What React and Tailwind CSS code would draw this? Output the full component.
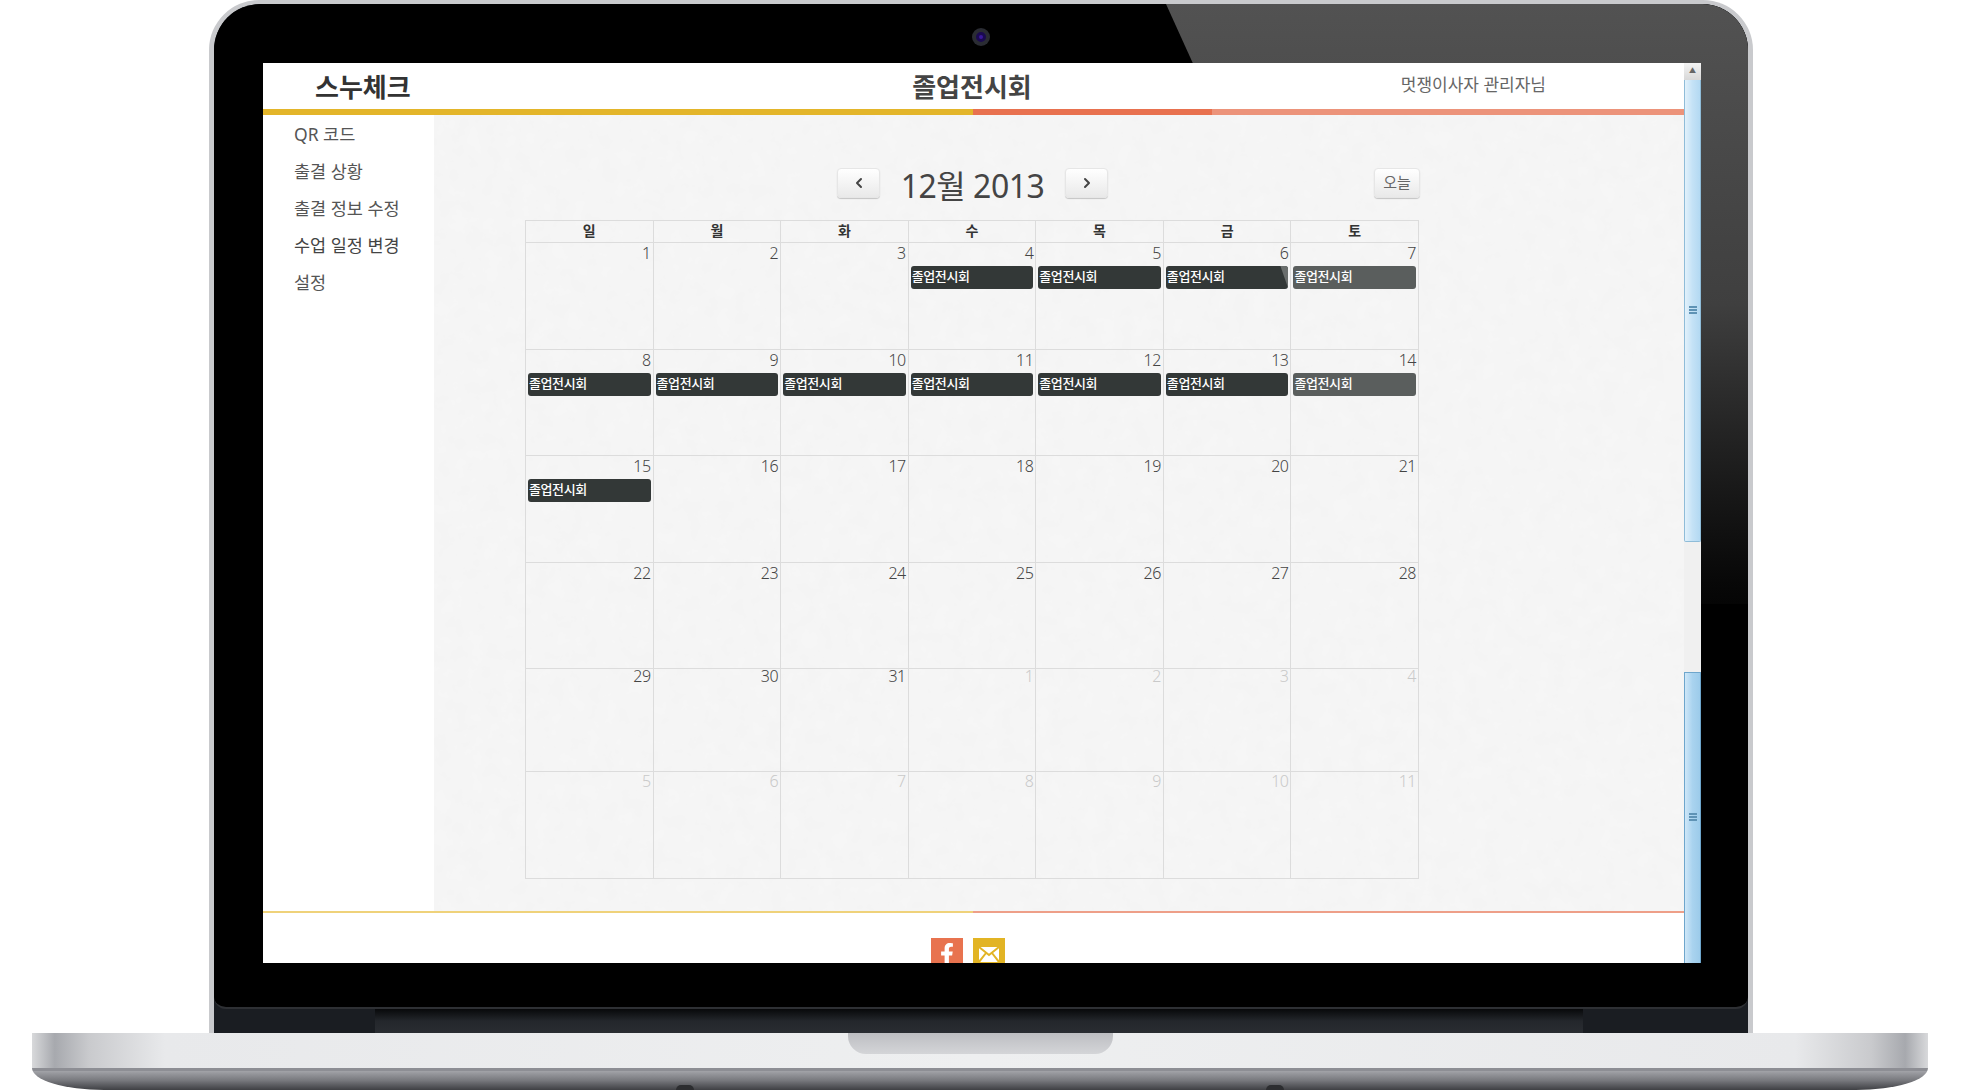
import React from "react";
import { ChevronLeft, ChevronRight } from "lucide-react";
import { FaFacebookF } from "react-icons/fa";

const navItems = ["QR 코드", "출결 상황", "출결 정보 수정", "수업 일정 변경", "설정"];
const weekDays = ["일", "월", "화", "수", "목", "금", "토"];
const eventDays = [4, 5, 6, 7, 8, 9, 10, 11, 12, 13, 14, 15];
const rows = [
  { height: "h-[107px]", label: "leading-[20px]" },
  { height: "h-[106px]", label: "leading-[20px]" },
  { height: "h-[107px]", label: "leading-[20px]" },
  { height: "h-[106px]", label: "leading-[20px]" },
  { height: "h-[103px]", label: "leading-[14px]" },
  { height: "h-[107px]", label: "leading-[18px]" },
];

// 42 cells, december 2013 starts on a sunday
const cells = Array.from({ length: 42 }, (_, i) => {
  if (i < 31) return { day: i + 1, muted: false };
  return { day: i - 30, muted: true };
});

const ToolButton = ({ className, children }) => (
  <button className={`h-[30px] flex items-center justify-center rounded-[4px] border border-[#e6e6e6] bg-gradient-to-b from-white to-[#e9e9e9] shadow-[0_1px_1px_rgba(0,0,0,0.2)] text-[#444] ${className}`}>
    {children}
  </button>
);

const Event = ({ light, glare }) => (
  <div className={`relative mx-[2px] mt-[-1px] h-[23px] rounded-[3px] overflow-hidden pl-[1px] text-[13px] leading-[20px] font-medium tracking-[-0.4px] text-white ${light ? "bg-[#5a5e5d]" : "bg-[#333837]"}`}>
    졸업전시회
    {glare && <div className="absolute top-0 right-0 w-[8px] h-[23px] bg-[#6a6e6d] [clip-path:polygon(0_0,100%_0,100%_100%)]" />}
  </div>
);

const Calendar = () => (
  <div className="relative w-[894px] border-r border-b border-[#dcdcdc]">
    <div className="grid grid-cols-7 h-[22px]">
      {weekDays.map((d) => (
        <div key={d} className="border-l border-t border-[#dcdcdc] text-center text-[14px] leading-[19px] font-bold text-[#333]">
          {d}
        </div>
      ))}
    </div>
    {rows.map((row, r) => (
      <div key={r} className={`grid grid-cols-7 ${row.height}`}>
        {cells.slice(r * 7, r * 7 + 7).map((c, i) => (
          <div key={i} className="border-l border-t border-[#dcdcdc]">
            <div className={`h-[24px] pr-[2px] text-right text-[16px] font-light tracking-[-0.5px] ${row.label} ${c.muted ? "text-[#c9c9c9]" : "text-[#444]"}`}>
              {c.day}
            </div>
            {!c.muted && eventDays.includes(c.day) && <Event light={i === 6} glare={c.day === 6} />}
          </div>
        ))}
      </div>
    ))}
  </div>
);

const Grip = () => (
  <div className="w-[8px] h-[8px] flex flex-col justify-between mt-[-2px]">
    <div className="h-[2px] bg-[#5f93b5]" />
    <div className="h-[2px] bg-[#5f93b5]" />
    <div className="h-[2px] bg-[#5f93b5]" />
  </div>
);

const Scrollbar = () => (
  <div className="w-[17px] flex-none flex flex-col bg-[#f0f0f0]">
    <div className="h-[17px] flex items-center justify-center bg-gradient-to-b from-[#f4f4f4] to-[#d8d8d8] text-[7px] text-[#666]">▲</div>
    <div className="h-[462px] flex items-center justify-center border-x border-b border-[#8fbcd8] rounded-b-[2px] bg-gradient-to-r from-[#e2f1fb] via-[#c4e2f6] to-[#b3d9f2]">
      <Grip />
    </div>
    <div className="h-[130px]" />
    <div className="flex-1 flex items-center justify-center border-x border-t border-[#6ea6cc] bg-gradient-to-r from-[#cfe7f8] via-[#a9d3ef] to-[#9ccbea]">
      <Grip />
    </div>
  </div>
);

const Screen = () => (
  <div className="relative z-10 flex h-[900px] overflow-hidden bg-white">
    <div className="w-[1421px] flex-none flex flex-col">
      {/* header */}
      <div className="h-[46px] flex-none flex items-center pl-[52px] pr-[138px]">
        <h1 className="w-[596px] text-[26px] font-bold text-[#333] whitespace-nowrap mt-[2px]">스누체크</h1>
        <h2 className="w-[122px] text-center text-[26px] font-semibold text-[#444] whitespace-nowrap mt-[2px]">졸업전시회</h2>
        <div className="flex-1 text-right text-[17px] text-[#666] whitespace-nowrap mt-[-2px]">멋쟁이사자 관리자님</div>
      </div>
      <div className="h-[6px] flex-none flex">
        <div className="w-[710px] bg-[#e3b52a]" />
        <div className="w-[239px] bg-[#e8714f]" />
        <div className="flex-1 bg-[#ec937a]" />
      </div>

      <div className="h-[796px] flex-none flex">
        <div className="w-[171px] pl-[31px] pt-[1px]">
          {navItems.map((item, i) => (
            <div key={item} className={`h-[37px] flex items-center text-[17.5px] whitespace-nowrap ${i === 3 ? "text-[#444]" : "text-[#555]"}`}>{item}</div>
          ))}
        </div>
        <div className="relative flex-1 bg-[#f6f6f6] pl-[91px] pt-[53px]">
          {/* paper grain */}
          <svg className="absolute inset-0 w-full h-full">
            <filter id="paper">
              <feTurbulence type="fractalNoise" baseFrequency="0.06" numOctaves="4" />
              <feColorMatrix values="0 0 0 0 0.5  0 0 0 0 0.5  0 0 0 0 0.5  0 0 0 0.06 -0.012" />
            </filter>
            <rect width="100%" height="100%" filter="url(#paper)" />
          </svg>
          <div className="relative w-[895px] flex items-center pl-[312px] gap-[22px] mb-[22px]">
            <ToolButton className="w-[43px]"><ChevronLeft size={16} strokeWidth={3} /></ToolButton>
            <div className="w-[141px] h-[30px] flex items-center justify-center text-[32px] tracking-[-0.5px] text-[#444] whitespace-nowrap pt-[6px]">12월 2013</div>
            <ToolButton className="w-[43px]"><ChevronRight size={16} strokeWidth={3} /></ToolButton>
            <ToolButton className="w-[46px] ml-auto text-[15px] text-[#666] pb-[2px]">오늘</ToolButton>
          </div>
          <Calendar />
        </div>
      </div>

      {/* footer */}
      <div className="h-[2px] flex-none flex">
        <div className="w-[710px] bg-[#efd27a]" />
        <div className="flex-1 bg-[#ee9f88]" />
      </div>
      <div className="flex justify-center gap-[10px] pt-[25px] pr-[11px]">
        <div className="w-[32px] h-[32px] bg-[#e8734f] flex items-center justify-center text-white">
          <FaFacebookF size={22} />
        </div>
        <div className="w-[32px] h-[32px] bg-[#e2b424] flex items-center justify-center">
          <svg width="20" height="15" viewBox="0 0 20 15">
            <rect width="20" height="15" fill="#fff" />
            <path d="M0 0 L10 8 L20 0 M0 15 L7 6 M20 15 L13 6" stroke="#e2b424" strokeWidth="2" fill="none" />
          </svg>
        </div>
      </div>
    </div>
    <Scrollbar />
  </div>
);

const App = () => (
  <div className="w-[1967px] h-[1090px] overflow-hidden bg-white font-['Noto_Sans','Noto_Sans_CJK_KR',sans-serif]">
    <div className="pl-[209px]">
      {/* lid */}
      <div className="w-[1544px] h-[1033px] rounded-t-[50px] bg-[#c9cacd] px-[5px] pt-[4px]">
        <div className="relative h-[1029px] rounded-t-[46px] overflow-hidden bg-[#1a1d22] flex flex-col">
          <div className="relative h-[1005px] flex-none rounded-b-[12px] overflow-hidden bg-black border-b-[2px] border-[#2e3034] pl-[49px] pr-[47px] pt-[59px]">
            {/* reflection on the bezel */}
            <div className="absolute top-0 right-0 w-[582px] h-[600px] bg-gradient-to-b from-[#525252] via-[#3f3f3f] to-[#050505] [clip-path:polygon(0_0,100%_0,100%_100%,272px_100%)]" />
            {/* camera */}
            <div className="absolute top-[24px] left-[758px] w-[18px] h-[18px] rounded-full bg-[#2a2c33] flex items-center justify-center">
              <div className="w-[10px] h-[10px] rounded-full bg-[#3a189a] border-[3px] border-[#1a0a50]" />
            </div>
            <Screen />
          </div>
          {/* hinge */}
          <div className="flex-1 flex">
            <div className="w-[161px]" />
            <div className="flex-1 bg-gradient-to-b from-[#08090b] via-[#24272c] to-[#2a2d32]" />
            <div className="w-[165px]" />
          </div>
        </div>
      </div>
    </div>
    {/* base */}
    <div className="relative ml-[32px] w-[1896px] h-[57px] overflow-hidden rounded-bl-[72px_22px] rounded-br-[72px_22px]">
      <div className="h-[35px] flex justify-center bg-[linear-gradient(to_right,#d8d9db_0%,#a7a9ae_1.2%,#c9cacd_3%,#e8e9eb_7%,#eeeff0_50%,#e8e9eb_93%,#c9cacd_97%,#a7a9ae_98.8%,#d8d9db_100%)]">
        <div className="w-[265px] h-[21px] rounded-b-[18px] bg-gradient-to-b from-[#bdbec2] to-[#d4d5d8]" />
      </div>
      <div className="h-[3px] bg-[#8d8e94]" />
      <div className="h-[19px] bg-gradient-to-b from-[#a2a3a8] via-[#77787d] to-[#3f4044]" />
      <div className="absolute left-[644px] bottom-0 w-[18px] h-[5px] rounded-t-full bg-[#2c2d30]" />
      <div className="absolute left-[1234px] bottom-0 w-[18px] h-[5px] rounded-t-full bg-[#2c2d30]" />
    </div>
  </div>
);

export default App;
